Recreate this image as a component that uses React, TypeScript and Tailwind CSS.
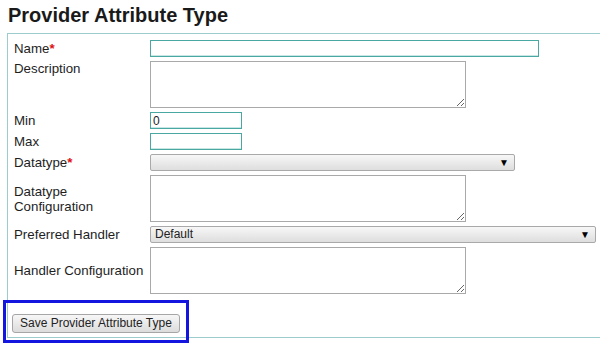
import type { ReactNode } from "react";

function Row({ label, height, top, children }: { label: ReactNode; height: number; top?: boolean; children: ReactNode }) {
  return (
    <div className={`flex ${top ? "items-start" : "items-center"}`} style={{ height }}>
      <div className="w-[136px] shrink-0 leading-[15px]">{label}</div>
      {children}
    </div>
  );
}

function Req({ text }: { text: string }) {
  return (
    <>
      {text}
      <span className="font-bold text-[#e01010]">*</span>
    </>
  );
}

function Select({ width, value }: { width: string; value?: string }) {
  return (
    <div className={`relative h-[17px] ${width} rounded-[2px] border border-[#a9a9a9] bg-gradient-to-b from-[#f7f7f7] to-[#dedede]`}>
      <span className="absolute left-[4px] top-0 text-[12px] leading-[15px] text-[#222]">{value}</span>
      <span className="absolute right-[5px] top-0 text-[10px] leading-[15px] text-black">▼</span>
    </div>
  );
}

const inputCls = "h-[17px] border border-[#4aa8a3] bg-white px-[2px] text-[12px] leading-[15px] outline-none shadow-[inset_0_-1px_0_#c8e6e4]";
const areaCls = "h-[47px] w-[316px] border border-[#a9a9a9] bg-white outline-none";

export default function App() {
  return (
    <div className="relative h-[344px] w-[600px] overflow-hidden bg-white font-['Liberation_Sans',Arial,sans-serif] text-[13.3px] text-[#1e1e1e]">
      <h2 className="h-[33px] pl-[8px] pt-[3px] text-[20px] font-bold leading-[24px] text-[#1a1a1a]">Provider Attribute Type</h2>
      <div className="ml-[7px] h-[305px] w-[620px] border border-[#9ccccc] pl-[6px] pt-[6px]">
        <div className="flex flex-col gap-[4px]">
          <Row label={<Req text="Name" />} height={17}>
            <input className={`${inputCls} w-[389px]`} />
          </Row>
          <Row label="Description" height={47} top>
            <textarea className={areaCls} />
          </Row>
          <Row label="Min" height={17}>
            <input className={`${inputCls} w-[92px]`} defaultValue="0" />
          </Row>
          <Row label="Max" height={17}>
            <input className={`${inputCls} w-[92px]`} />
          </Row>
          <Row label={<Req text="Datatype" />} height={17}>
            <Select width="w-[365px]" />
          </Row>
          <Row label={<>Datatype<br />Configuration</>} height={47}>
            <textarea className={areaCls} />
          </Row>
          <Row label="Preferred Handler" height={17}>
            <Select width="w-[446px]" value="Default" />
          </Row>
          <Row label="Handler Configuration" height={47}>
            <textarea className={areaCls} />
          </Row>
        </div>
        <button className="ml-[-2px] mt-[20px] h-[19px] rounded-[3px] border border-[#a6a6a6] bg-gradient-to-b from-[#f7f7f7] to-[#dcdcdc] px-[7px] text-[12px] leading-[15px] text-[#222]">
          Save Provider Attribute Type
        </button>
      </div>
      <div className="absolute left-[3px] top-[300px] h-[43px] w-[186px] border-[3px] border-[#1515e0]" />
    </div>
  );
}
